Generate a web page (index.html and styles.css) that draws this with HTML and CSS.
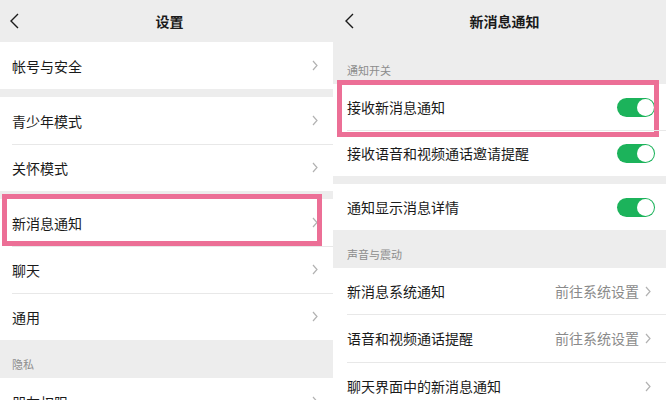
FILE: index.html
```html
<!DOCTYPE html>
<html lang="zh-CN">
<head>
    <meta charset="UTF-8">
    <meta name="viewport" content="width=device-width, initial-scale=1.0">
    <title>设置 - 新消息通知</title>
    <link rel="stylesheet" href="styles.css">
</head>
<body>
    <div class="screens">
        <!-- 左边：设置 -->
        <div class="screen screen-left">
            <div class="topbar">
                <svg class="back" width="9" height="16" viewBox="0 0 9 16"><polyline points="8,1 1,8 8,15" /></svg>
                <span class="title">设置</span>
                <span></span>
            </div>

            <div class="group">
                <div class="row"><span class="label">帐号与安全</span><svg class="arrow" width="6" height="11" viewBox="0 0 6 11"><polyline points="1,1 5,5.5 1,10" /></svg></div>
            </div>

            <div class="group gap">
                <div class="row"><span class="label">青少年模式</span><svg class="arrow" width="6" height="11" viewBox="0 0 6 11"><polyline points="1,1 5,5.5 1,10" /></svg></div>
                <div class="row"><span class="label">关怀模式</span><svg class="arrow" width="6" height="11" viewBox="0 0 6 11"><polyline points="1,1 5,5.5 1,10" /></svg></div>
            </div>

            <div class="group gap">
                <div class="row">
                    <span class="label">新消息通知</span><svg class="arrow" width="6" height="11" viewBox="0 0 6 11"><polyline points="1,1 5,5.5 1,10" /></svg>
                    <div class="mark mark-left"></div>
                </div>
                <div class="row"><span class="label">聊天</span><svg class="arrow" width="6" height="11" viewBox="0 0 6 11"><polyline points="1,1 5,5.5 1,10" /></svg></div>
                <div class="row"><span class="label">通用</span><svg class="arrow" width="6" height="11" viewBox="0 0 6 11"><polyline points="1,1 5,5.5 1,10" /></svg></div>
            </div>

            <div class="section-title">隐私</div>
            <div class="group">
                <div class="row"><span class="label">朋友权限</span><svg class="arrow" width="6" height="11" viewBox="0 0 6 11"><polyline points="1,1 5,5.5 1,10" /></svg></div>
            </div>
        </div>

        <!-- 右边：新消息通知 -->
        <div class="screen screen-right">
            <div class="topbar">
                <svg class="back" width="9" height="16" viewBox="0 0 9 16"><polyline points="8,1 1,8 8,15" /></svg>
                <span class="title">新消息通知</span>
                <span></span>
            </div>

            <div class="section-title first">通知开关</div>
            <div class="group">
                <div class="row">
                    <span class="label">接收新消息通知</span><span class="switch"></span>
                    <div class="mark mark-right"></div>
                </div>
                <div class="row"><span class="label">接收语音和视频通话邀请提醒</span><span class="switch"></span></div>
            </div>

            <div class="group gap">
                <div class="row"><span class="label">通知显示消息详情</span><span class="switch"></span></div>
            </div>

            <div class="section-title">声音与震动</div>
            <div class="group">
                <div class="row"><span class="label">新消息系统通知</span><span class="value">前往系统设置</span><svg class="arrow" width="6" height="11" viewBox="0 0 6 11"><polyline points="1,1 5,5.5 1,10" /></svg></div>
                <div class="row tall"><span class="label">语音和视频通话提醒</span><span class="value">前往系统设置</span><svg class="arrow" width="6" height="11" viewBox="0 0 6 11"><polyline points="1,1 5,5.5 1,10" /></svg></div>
                <div class="row tall"><span class="label">聊天界面中的新消息通知</span><svg class="arrow" width="6" height="11" viewBox="0 0 6 11"><polyline points="1,1 5,5.5 1,10" /></svg></div>
            </div>
        </div>
    </div>
</body>
</html>
```

FILE: styles.css
```css
html, body {
    margin: 0;
    height: 400px;
    overflow: hidden;
}
body {
    font-family: "Noto Sans CJK SC", "Noto Sans", sans-serif;
    color: #1a1a1a;
    background-color: #ededed;
}
.screens {
    display: flex;
}
.screen {
    width: 333px;
    height: 400px;
    overflow: hidden;
    background: #ededed;
    --pad: 14px;
    --row: 46px;
}
.screen-left {
    --pad: 12px;
    --row: 47px;
}
.topbar {
    height: 42px;
    display: grid;
    grid-template-columns: 1fr auto 1fr;
    align-items: center;
    padding-left: calc(var(--pad) - 2px);
}
.back {
    fill: none;
    stroke: #1a1a1a;
    stroke-width: 1.4;
}
.title {
    font-size: 14px;
    font-weight: 600;
    margin-left: -4px;
}
.screen-right .title {
    margin-left: -2px;
}
.group {
    background: #fff;
}
.gap {
    margin-top: 8px;
}
.row {
    position: relative;
    display: flex;
    align-items: center;
    height: var(--row);
    padding: 0 11px 0 var(--pad);
    font-size: 14px;
}
.row.tall {
    height: 48px;
}
.row + .row::before {
    content: "";
    position: absolute;
    top: 0;
    left: var(--pad);
    right: 0;
    height: 1px;
    background: #e8e8e8;
}
.label {
    flex: 1;
}
.value {
    color: #8a8a8a;
    margin-right: 6px;
}
.arrow {
    fill: none;
    stroke: #b2b2b2;
    stroke-width: 1.2;
    margin-right: 4px;
}
.switch {
    position: relative;
    width: 38px;
    height: 19px;
    border-radius: 10px;
    background: #1cb35b;
}
.switch::after {
    content: "";
    position: absolute;
    top: 1px;
    right: 1px;
    width: 17px;
    height: 17px;
    border-radius: 50%;
    background: #fff;
}
.section-title {
    height: 38px;
    box-sizing: border-box;
    display: flex;
    align-items: flex-end;
    padding: 0 0 6px var(--pad);
    font-size: 11px;
    color: #8c8c8c;
}
.section-title.first {
    height: 42px;
    padding-bottom: 6px;
}
.mark {
    position: absolute;
    border: 5px solid #ec6f96;
    pointer-events: none;
}
.mark-left {
    top: -5px;
    left: 2px;
    right: 11px;
    bottom: 0;
}
.mark-right {
    top: -4px;
    left: 4px;
    right: 7px;
    bottom: -7px;
}
```
